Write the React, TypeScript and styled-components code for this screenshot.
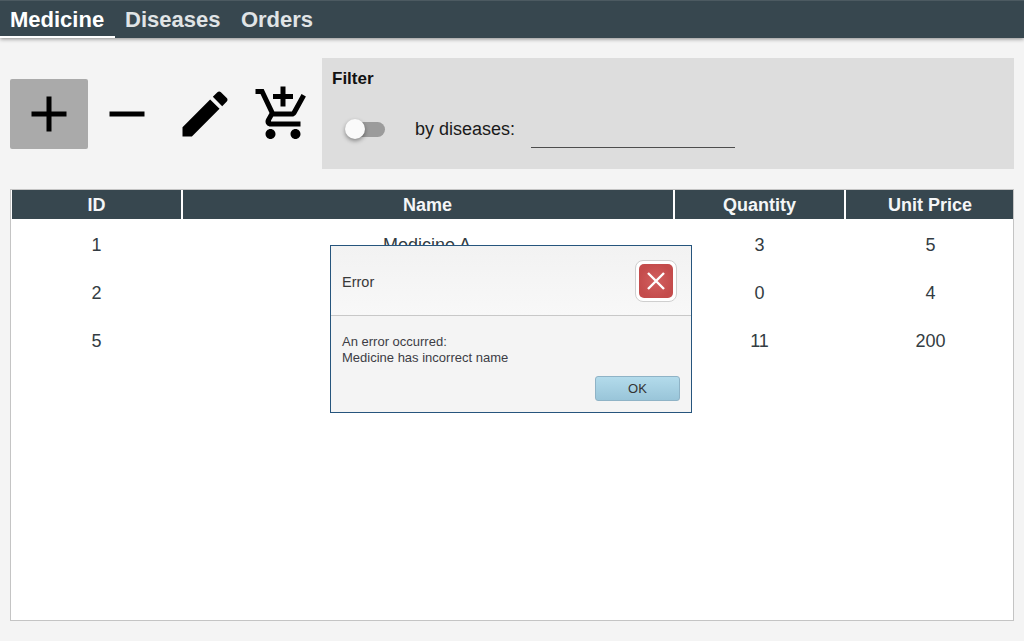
import styled, { createGlobalStyle } from "styled-components";

const GlobalStyle = createGlobalStyle`
  html, body {
    margin: 0;
    padding: 0;
    background: #f4f4f4;
  }
  body {
    font-family: "Liberation Sans", Arial, sans-serif;
    overflow: hidden;
  }
`;

const Page = styled.div`
  position: relative;
  width: 1024px;
  height: 641px;
  display: flex;
  flex-direction: column;
  background: #f4f4f4;
`;

const NavBar = styled.nav`
  display: flex;
  height: 38px;
  box-sizing: border-box;
  background: #37474f;
  border-top: 1px solid #4c5a61;
  box-shadow: 0 1px 4px rgba(0, 0, 0, 0.45);
`;

const Tab = styled.div<{ $active?: boolean }>`
  padding: 0 10px;
  margin-right: ${(p) => (p.$active ? "0" : "0.5px")};
  min-width: ${(p) => (p.$active ? "95px" : "0")};
  line-height: 37px;
  height: 35px;
  font-size: 22px;
  font-weight: 700;
  color: ${(p) => (p.$active ? "#ffffff" : "#e0e4e6")};
  border-bottom: 2px solid ${(p) => (p.$active ? "#ffffff" : "transparent")};
`;

const Content = styled.main`
  flex: 1;
  display: flex;
  flex-direction: column;
  padding: 20px 10px 20px;
  min-height: 0;
`;

const ToolRow = styled.section`
  display: flex;
  align-items: center;
  height: 111px;
`;

const ToolButton = styled.button<{ $pressed?: boolean }>`
  width: 78px;
  height: 70px;
  padding: 0;
  border: 0;
  border-radius: 2px;
  display: flex;
  align-items: center;
  justify-content: center;
  background: ${(p) => (p.$pressed ? "#aaaaaa" : "transparent")};

  svg {
    width: 60px;
    height: 60px;
    fill: #000;
  }
`;

const FilterPanel = styled.section`
  flex: 1;
  align-self: stretch;
  box-sizing: border-box;
  padding: 11px 10px 10px;
  background: #dddddd;
`;

const FilterTitle = styled.div`
  font-size: 17px;
  line-height: 20px;
  font-weight: 700;
  color: #111;
`;

const FilterRow = styled.div`
  display: flex;
  align-items: center;
  margin-top: 20px;
  padding-left: 13px;
  height: 40px;
`;

const Toggle = styled.div`
  position: relative;
  width: 40px;
  height: 20px;
  flex: none;
`;

const ToggleTrack = styled.div`
  position: absolute;
  left: 2px;
  top: 3px;
  width: 38px;
  height: 15px;
  border-radius: 8px;
  background: #9b9b9b;
`;

const ToggleThumb = styled.div`
  position: absolute;
  left: 0;
  top: 0;
  width: 20px;
  height: 20px;
  border-radius: 50%;
  background: #fafafa;
  box-shadow: 0 2px 4px rgba(0, 0, 0, 0.4);
`;

const FilterLabel = styled.label`
  margin-left: 30px;
  font-size: 18px;
  color: #1a1a1a;
`;

const FilterInput = styled.div`
  margin-left: 16px;
  width: 204px;
  height: 38px;
  box-sizing: border-box;
  border-bottom: 1px solid #4d4d4d;
`;

const TableBox = styled.section`
  flex: 1;
  margin-top: 20px;
  border: 1px solid #c4c4c4;
  background: #fff;
  min-height: 0;
`;

const COLUMNS = "171px 492px 171px 1fr";

const HeaderRow = styled.div`
  display: grid;
  grid-template-columns: ${COLUMNS};
  height: 29px;
  margin: 0 0 2px 1px;
  background: #37474f;
`;

const HeaderCell = styled.div`
  line-height: 30px;
  text-align: center;
  font-size: 18px;
  font-weight: 700;
  color: #f4f6f7;
  border-right: 2px solid #fff;
  box-sizing: border-box;

  &:nth-child(2) {
    padding-right: 1px;
  }

  &:last-child {
    border-right: 0;
    padding-left: 1px;
  }
`;

const BodyRow = styled.div`
  display: grid;
  grid-template-columns: ${COLUMNS};
  height: 48px;
  margin-left: 1px;
`;

const BodyCell = styled.div`
  line-height: 48px;
  text-align: center;
  font-size: 18px;
  color: #333c42;
  padding-right: 2px;

  &:nth-child(2) {
    padding-right: 4px;
  }

  &:last-child {
    padding-right: 0;
    padding-left: 2px;
  }
`;

const Dialog = styled.div`
  position: absolute;
  left: 330px;
  top: 245px;
  width: 362px;
  height: 168px;
  box-sizing: border-box;
  border: 1px solid #26557d;
  background: #f4f4f4;
  display: flex;
  flex-direction: column;
  font-size: 13px;
  color: #333;
`;

const DialogHeader = styled.header`
  height: 70px;
  flex: none;
  box-sizing: border-box;
  padding: 0 14px 0 11px;
  display: flex;
  align-items: center;
  justify-content: space-between;
  background: linear-gradient(#f2f2f2, #f8f8f8);
  border-bottom: 1px solid #c8c8c8;
`;

const DialogTitle = styled.div`
  font-size: 14.5px;
  padding-top: 2px;
  color: #3a3a3a;
`;

const ErrorBadge = styled.div`
  width: 42px;
  height: 42px;
  box-sizing: border-box;
  padding: 3px;
  border: 1px solid #cfcfcf;
  border-radius: 8px;
  background: #fff;

  svg {
    display: block;
    width: 34px;
    height: 34px;
  }
`;

const DialogBody = styled.div`
  flex: 1;
  display: flex;
  flex-direction: column;
  padding: 18px 11px 0;
`;

const Message = styled.div`
  line-height: 16px;
  color: #3d3d45;
`;

const OkRow = styled.div`
  display: flex;
  justify-content: flex-end;
  margin-top: 10px;
`;

const OkButton = styled.button`
  width: 85px;
  height: 25px;
  padding: 0;
  border: 1px solid #8fb3c6;
  border-radius: 3px;
  background: linear-gradient(#b3dbeb, #99c5d9);
  font-family: inherit;
  font-size: 13px;
  color: #333;
`;

const rows = [
  { id: 1, name: "Medicine A", quantity: 3, price: 5 },
  { id: 2, name: "", quantity: 0, price: 4 },
  { id: 5, name: "", quantity: 11, price: 200 },
];

export default function App() {
  return (
    <Page>
      <GlobalStyle />
      <NavBar>
        <Tab $active>Medicine</Tab>
        <Tab>Diseases</Tab>
        <Tab>Orders</Tab>
      </NavBar>
      <Content>
        <ToolRow>
          <ToolButton $pressed aria-label="Add">
            <svg viewBox="0 0 24 24">
              <path d="M19 13h-6v6h-2v-6H5v-2h6V5h2v6h6v2z" />
            </svg>
          </ToolButton>
          <ToolButton aria-label="Remove">
            <svg viewBox="0 0 24 24">
              <path d="M19 13H5v-2h14v2z" />
            </svg>
          </ToolButton>
          <ToolButton aria-label="Edit">
            <svg viewBox="0 0 24 24">
              <path d="M3 17.25V21h3.75L17.81 9.94l-3.75-3.75L3 17.25zM20.71 7.04c.39-.39.39-1.02 0-1.41l-2.34-2.34c-.39-.39-1.02-.39-1.41 0l-1.83 1.83 3.75 3.75 1.83-1.83z" />
            </svg>
          </ToolButton>
          <ToolButton aria-label="Add to cart">
            <svg viewBox="0 0 24 24">
              <path d="M11 9h2V6h3V4h-3V1h-2v3H8v2h3v3zm-4 9c-1.1 0-1.99.9-1.99 2S5.9 22 7 22s2-.9 2-2-.9-2-2-2zm10 0c-1.1 0-1.99.9-1.99 2s.89 2 1.99 2 2-.9 2-2-.9-2-2-2zm-9.83-3.25l.03-.12.9-1.63h7.45c.75 0 1.41-.41 1.75-1.03l3.86-7.01L19.42 4h-.01l-1.1 2-2.76 5H8.53l-.13-.27L6.16 6l-.95-2-.94-2H1v2h2l3.6 7.59-1.35 2.45c-.16.28-.25.61-.25.96 0 1.1.9 2 2 2h12v-2H7.42c-.13 0-.25-.11-.25-.25z" />
            </svg>
          </ToolButton>
          <FilterPanel>
            <FilterTitle>Filter</FilterTitle>
            <FilterRow>
              <Toggle>
                <ToggleTrack />
                <ToggleThumb />
              </Toggle>
              <FilterLabel>by diseases:</FilterLabel>
              <FilterInput />
            </FilterRow>
          </FilterPanel>
        </ToolRow>
        <TableBox>
          <HeaderRow>
            <HeaderCell>ID</HeaderCell>
            <HeaderCell>Name</HeaderCell>
            <HeaderCell>Quantity</HeaderCell>
            <HeaderCell>Unit Price</HeaderCell>
          </HeaderRow>
          {rows.map((row) => (
            <BodyRow key={row.id}>
              <BodyCell>{row.id}</BodyCell>
              <BodyCell>{row.name}</BodyCell>
              <BodyCell>{row.quantity}</BodyCell>
              <BodyCell>{row.price}</BodyCell>
            </BodyRow>
          ))}
        </TableBox>
      </Content>
      <Dialog>
        <DialogHeader>
          <DialogTitle>Error</DialogTitle>
          <ErrorBadge>
            <svg viewBox="0 0 34 34">
              <defs>
                <radialGradient id="errorFill">
                  <stop offset="0" stopColor="#d25f5f" />
                  <stop offset="1" stopColor="#c44c4c" />
                </radialGradient>
              </defs>
              <rect width="34" height="34" rx="5" fill="url(#errorFill)" />
              <path d="M9 9l16 16M25 9L9 25" stroke="#fff" strokeWidth="2.4" />
            </svg>
          </ErrorBadge>
        </DialogHeader>
        <DialogBody>
          <Message>
            An error occurred:
            <br />
            Medicine has incorrect name
          </Message>
          <OkRow>
            <OkButton>OK</OkButton>
          </OkRow>
        </DialogBody>
      </Dialog>
    </Page>
  );
}
